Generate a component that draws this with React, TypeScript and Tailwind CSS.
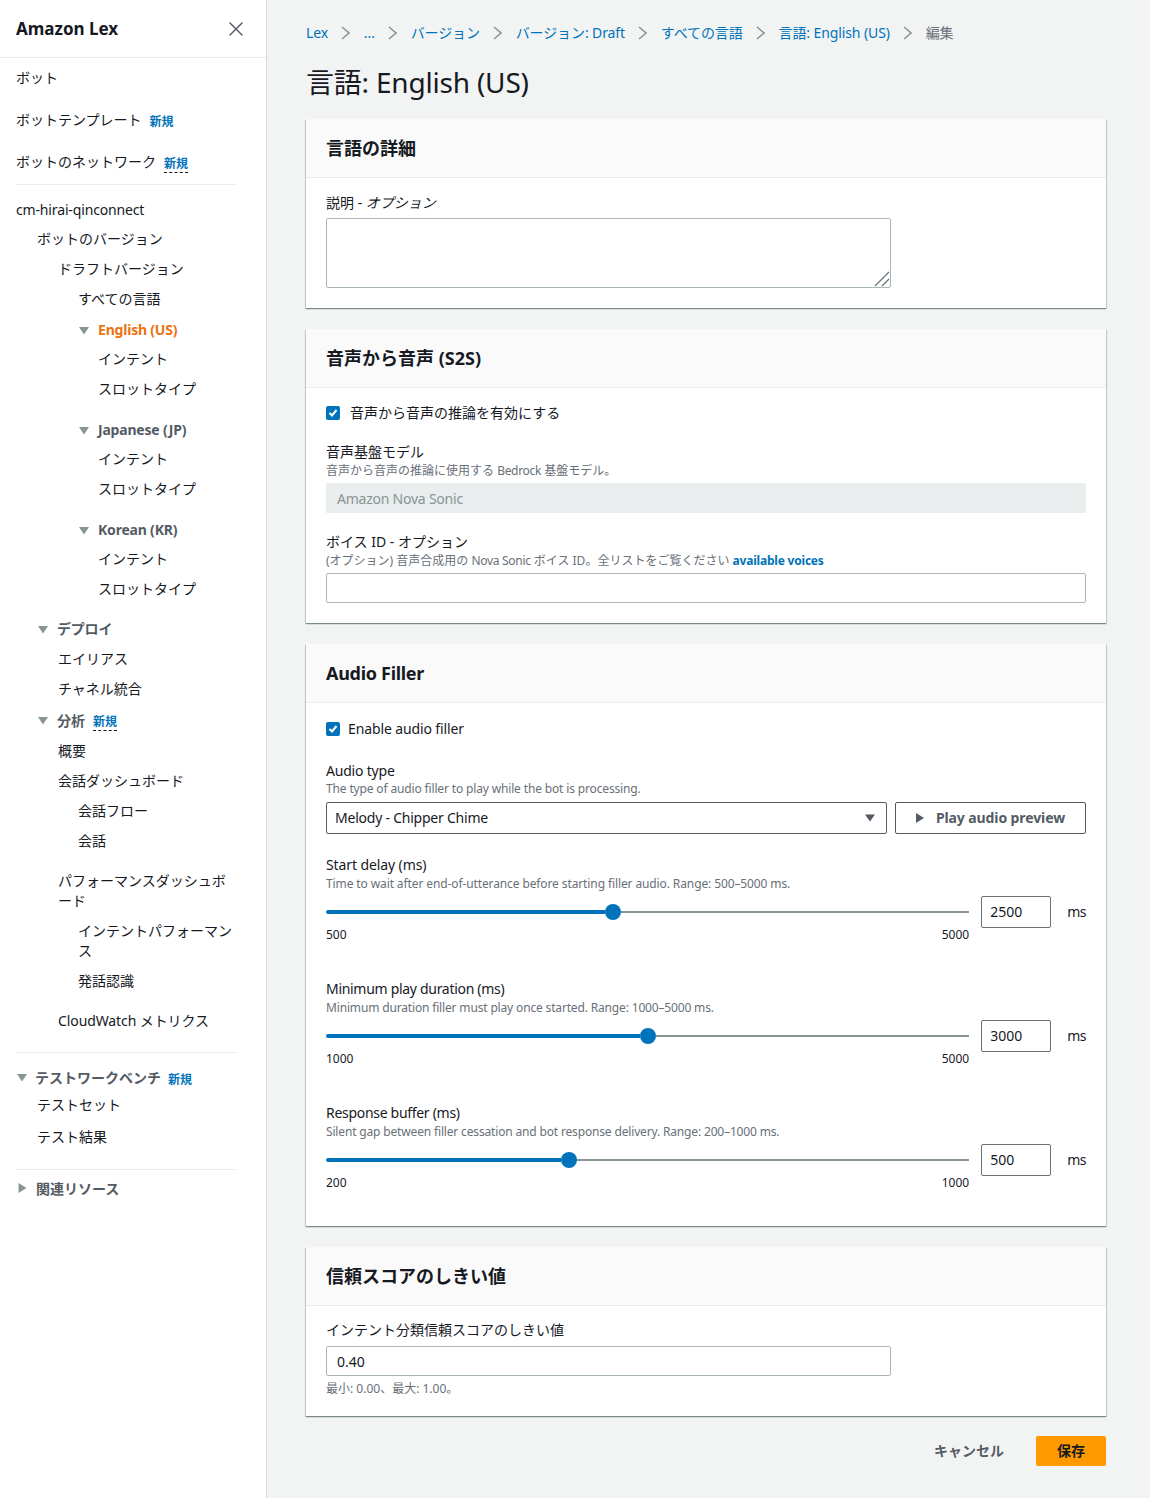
import React from 'react';
import { X } from 'lucide-react';

const font = { fontFamily: '"Noto Sans", "Noto Sans CJK JP", sans-serif' };

function Tri({ right }: { right?: boolean }) {
  return (
    <svg width="10" height="10" viewBox="0 0 10 10" className="shrink-0 fill-[#879596]">
      {right ? <path d="M1.5 0 L9.5 5 L1.5 10 Z" /> : <path d="M0 2 H10 L5 9.5 Z" />}
    </svg>
  );
}

function New({ dashed, className }: { dashed?: boolean; className?: string }) {
  return (
    <span
      className={`text-[12px] font-bold leading-[16px] text-[#0073bb] ${dashed ? 'border-b border-dashed border-[#16191f]' : ''} ${className || ''}`}
    >
      新規
    </span>
  );
}

function NavItem({ className, children }: { className: string; children: React.ReactNode }) {
  return <div className={`flex items-center text-[14px] leading-[20px] text-[#16191f] ${className}`}>{children}</div>;
}

function NavGroup({ className, label, color }: { className: string; label: string; color?: string }) {
  return (
    <div className={`flex items-center gap-[9px] text-[14px] font-bold leading-[20px] tracking-[-0.2px] ${color || 'text-[#545b64]'} ${className}`}>
      <Tri />
      {label}
    </div>
  );
}

function Sidebar() {
  return (
    <aside className="w-[267px] shrink-0 border-r border-[#d5dbdb] bg-white">
      <div className="flex h-[58px] items-center justify-between border-b border-[#eaeded] pl-[16px] pr-[18px]">
        <span className="text-[17px] font-bold text-[#16191f]">Amazon Lex</span>
        <X size={24} strokeWidth={1.4} className="text-[#545b64]" />
      </div>
      <div className="pb-[20px]">
        <NavItem className="h-[30px] mt-[5px] pl-[16px]">ボット</NavItem>
        <NavItem className="h-[30px] mt-[12px] pl-[16px]">ボットテンプレート<New className="ml-[8px] mt-[4px]" /></NavItem>
        <NavItem className="h-[30px] mt-[12px] pl-[16px]">ボットのネットワーク<New dashed className="ml-[8px] mt-[4px]" /></NavItem>
        <div className="mx-[16px] mt-[7px] w-[220px] border-t border-[#eaeded]" />
        <NavItem className="h-[30px] mt-[10px] pl-[16px] tracking-[-0.15px]">cm-hirai-qinconnect</NavItem>
        <NavItem className="h-[30px] pl-[37px] -mt-px">ボットのバージョン</NavItem>
        <NavItem className="h-[30px] pl-[58px]">ドラフトバージョン</NavItem>
        <NavItem className="h-[30px] pl-[78px]">すべての言語</NavItem>
        <NavGroup className="h-[30px] pl-[79px] mt-px" label="English (US)" color="text-[#ec7211]" />
        <NavItem className="h-[30px] pl-[98px] -mt-px">インテント</NavItem>
        <NavItem className="h-[30px] pl-[98px]">スロットタイプ</NavItem>
        <NavGroup className="h-[30px] pl-[79px] mt-[11px]" label="Japanese (JP)" />
        <NavItem className="h-[30px] pl-[98px] -mt-px">インテント</NavItem>
        <NavItem className="h-[30px] pl-[98px]">スロットタイプ</NavItem>
        <NavGroup className="h-[30px] pl-[79px] mt-[11px]" label="Korean (KR)" />
        <NavItem className="h-[30px] pl-[98px] -mt-px">インテント</NavItem>
        <NavItem className="h-[30px] pl-[98px]">スロットタイプ</NavItem>
        <NavGroup className="h-[30px] pl-[38px] mt-[10px]" label="デプロイ" />
        <NavItem className="h-[30px] pl-[58px]">エイリアス</NavItem>
        <NavItem className="h-[30px] pl-[58px]">チャネル統合</NavItem>
        <div className="flex h-[30px] items-center gap-[9px] pl-[38px] mt-px text-[14px] font-bold text-[#545b64]">
          <Tri />
          分析
          <New dashed className="mt-[4px] -ml-px" />
        </div>
        <NavItem className="h-[30px] pl-[58px] mt-px">概要</NavItem>
        <NavItem className="h-[30px] pl-[58px]">会話ダッシュボード</NavItem>
        <NavItem className="h-[30px] pl-[78px]">会話フロー</NavItem>
        <NavItem className="h-[30px] pl-[78px]">会話</NavItem>
        <NavItem className="mt-[15px] pl-[58px] pr-[40px]">パフォーマンスダッシュボード</NavItem>
        <NavItem className="mt-[10px] pl-[78px] pr-[32px]">インテントパフォーマンス</NavItem>
        <NavItem className="h-[30px] mt-[5px] pl-[78px]">発話認識</NavItem>
        <NavItem className="h-[30px] mt-[10px] pl-[58px] tracking-[-0.1px]">CloudWatch メトリクス</NavItem>
        <div className="ml-[16px] mt-[16px] w-[220px] border-t border-[#eaeded]" />
        <div className="flex h-[30px] items-center gap-[8px] pl-[17px] mt-[9px] text-[14px] font-bold text-[#545b64]">
          <Tri />
          テストワークベンチ
          <New className="mt-[6px] -ml-px" />
        </div>
        <NavItem className="h-[30px] pl-[37px] -mt-[2px]">テストセット</NavItem>
        <NavItem className="h-[30px] pl-[37px] mt-[2px]">テスト結果</NavItem>
        <div className="ml-[16px] mt-[17px] w-[220px] border-t border-[#eaeded]" />
        <div className="flex h-[30px] items-center gap-[9px] pl-[17px] mt-[3px] text-[14px] font-bold text-[#545b64]">
          <Tri right />
          関連リソース
        </div>
      </div>
    </aside>
  );
}

function Chevron() {
  return (
    <svg width="9" height="14" viewBox="0 0 9 14" fill="none" className="shrink-0 stroke-[#879596]" strokeWidth="1.5">
      <path d="M1 1 L8 7 L1 13" />
    </svg>
  );
}

function Breadcrumbs() {
  const links = ['Lex', '...', 'バージョン', 'バージョン: Draft', 'すべての言語', '言語: English (US)'];
  return (
    <div className="flex h-[20px] items-center text-[14px] leading-[20px] tracking-[-0.1px]">
      {links.map((l) => (
        <React.Fragment key={l}>
          <span className="text-[#0073bb]">{l}</span>
          <span className="ml-[13px] mr-[13.8px]"><Chevron /></span>
        </React.Fragment>
      ))}
      <span className="text-[#687078]">編集</span>
    </div>
  );
}

function Card({ title, className, titleClass, children }: { title: string; className: string; titleClass?: string; children: React.ReactNode }) {
  return (
    <section className="bg-white shadow-[0_1px_1px_0_rgba(0,28,36,0.3),1px_1px_1px_0_rgba(0,28,36,0.15),-1px_1px_1px_0_rgba(0,28,36,0.15)]">
      <div className={`flex h-[59px] items-center border-b border-[#eaeded] bg-[#fafafa] px-[20px] text-[18px] font-bold text-[#16191f] ${titleClass || ''}`}>
        {title}
      </div>
      <div className={`px-[20px] ${className}`}>{children}</div>
    </section>
  );
}

function Check({ label, className }: { label: string; className: string }) {
  return (
    <div className="flex h-[20px] items-center text-[14px] text-[#16191f]">
      <span className={`mt-px flex h-[14px] w-[14px] items-center justify-center rounded-[2px] bg-[#0073bb] ${className}`}>
        <svg width="10" height="10" viewBox="0 0 10 10" fill="none" stroke="white" strokeWidth="2">
          <path d="M1.5 5 L4 7.5 L8.5 2" />
        </svg>
      </span>
      {label}
    </div>
  );
}

function Label({ children, className }: { children: React.ReactNode; className?: string }) {
  return <div className={`text-[14px] leading-[20px] text-[#16191f] ${className || ''}`}>{children}</div>;
}

function Desc({ children, className }: { children: React.ReactNode; className?: string }) {
  return <div className={`text-[12px] leading-[16px] text-[#687078] ${className || ''}`}>{children}</div>;
}

function Slider({ value, fill, min, max }: { value: string; fill: string; min: string; max: string }) {
  return (
    <div className="mt-[4px] flex items-start">
      <div className="flex-1">
        <div className="flex h-[32px] items-center">
          <div className={`h-[4px] rounded-l-full bg-[#0073bb] ${fill}`} />
          <div className="h-[16px] w-[16px] shrink-0 rounded-full bg-[#0073bb]" />
          <div className="h-[2px] flex-1 bg-[#879596]" />
        </div>
        <div className="-mt-px flex justify-between text-[12px] leading-[16px] text-[#16191f]">
          <span>{min}</span>
          <span>{max}</span>
        </div>
      </div>
      <div className="ml-[12px] flex h-[32px] w-[70px] items-center rounded-[2px] border border-[#687078] pb-px pl-[8px] text-[14px] text-[#16191f]">
        {value}
      </div>
      <div className="ml-[16px] flex h-[32px] items-center pb-px text-[14px] tracking-[-0.5px] text-[#16191f]">ms</div>
    </div>
  );
}

export default function App() {
  return (
    <div className="flex min-h-[1498px] w-[1150px] bg-[#f2f3f3]" style={font}>
      <Sidebar />
      <main className="min-w-0 flex-1 pl-[39px] pr-[44px] pt-[23px]">
        <Breadcrumbs />
        <h1 className="mt-[19px] h-[40px] text-[28px] font-normal leading-[40px] tracking-[-0.2px] text-[#16191f]">言語: English (US)</h1>
        <div className="mt-[17px] flex flex-col gap-[21px]">
          <Card title="言語の詳細" className="pb-[20px] pt-[15px]">
            <Label>説明 - <i>オプション</i></Label>
            <div className="relative mt-[5px] h-[70px] w-[565px] rounded-[2px] border border-[#aab7b8]">
              <svg width="16" height="16" viewBox="0 0 16 16" fill="none" stroke="#687078" className="absolute bottom-0 right-0" strokeWidth="1.2">
                <path d="M1 15 L15 1 M8 15 L15 8" />
              </svg>
            </div>
          </Card>

          <Card title="音声から音声 (S2S)" className="pb-[20px] pt-[14px]">
            <Check label="音声から音声の推論を有効にする" className="mr-[10px]" />
            <Label className="mt-[20px]">音声基盤モデル</Label>
            <Desc className="mt-px">音声から音声の推論に使用する <span className="tracking-[-0.3px]">Bedrock</span> 基盤モデル。</Desc>
            <div className="mt-[4px] flex h-[30px] items-center bg-[#eaeded] px-[11px] text-[14px] tracking-[-0.23px] text-[#879596]">Amazon Nova Sonic</div>
            <Label className="mt-[19px]">ボイス ID - オプション</Label>
            <Desc className="mt-px">
              (オプション) 音声合成用の <span className="tracking-[-0.3px]">Nova Sonic</span> ボイス ID。全リストをご覧ください{' '}
              <span className="font-bold tracking-[-0.2px] text-[#0073bb]">available voices</span>
            </Desc>
            <div className="mt-[4px] h-[30px] rounded-[2px] border border-[#aab7b8]" />
          </Card>

          <Card title="Audio Filler" className="pb-[35px] pt-[15px]" titleClass="tracking-[-0.3px]">
            <div className="tracking-[-0.12px]">
              <Check label="Enable audio filler" className="mr-[8px]" />
            </div>
            <Label className="mt-[23px] tracking-[-0.2px]">Audio type</Label>
            <Desc className="tracking-[-0.15px]">The type of audio filler to play while the bot is processing.</Desc>
            <div className="mt-[5px] flex gap-[8px]">
              <div className="flex h-[32px] w-[561px] items-center justify-between rounded-[2px] border border-[#545b64] pb-px pl-[8px] pr-[11px] text-[14px] tracking-[-0.23px] text-[#16191f]">
                Melody - Chipper Chime
                <svg width="10" height="10" viewBox="0 0 10 10" className="fill-[#545b64]"><path d="M0 1.5 H10 L5 8.5 Z" /></svg>
              </div>
              <div className="flex h-[32px] flex-1 items-center justify-center gap-[12px] rounded-[2px] border border-[#545b64] pb-px text-[14px] font-bold tracking-[-0.1px] text-[#545b64]">
                <svg width="8" height="10" viewBox="0 0 8 10" className="fill-[#545b64]"><path d="M0 0 L8 5 L0 10 Z" /></svg>
                Play audio preview
              </div>
            </div>
            <Label className="mt-[21px] tracking-[-0.1px]">Start delay (ms)</Label>
            <Desc className="mt-px tracking-[-0.11px]">Time to wait after end-of-utterance before starting filler audio. Range: 500–5000 ms.</Desc>
            <Slider value="2500" fill="w-[279px]" min="500" max="5000" />
            <Label className="mt-[36px] tracking-[-0.3px]">Minimum play duration (ms)</Label>
            <Desc className="mt-px tracking-[-0.16px]">Minimum duration filler must play once started. Range: 1000–5000 ms.</Desc>
            <Slider value="3000" fill="w-[314px]" min="1000" max="5000" />
            <Label className="mt-[36px] tracking-[-0.3px]">Response buffer (ms)</Label>
            <Desc className="mt-px tracking-[-0.16px]">Silent gap between filler cessation and bot response delivery. Range: 200–1000 ms.</Desc>
            <Slider value="500" fill="w-[235px]" min="200" max="1000" />
          </Card>

          <Card title="信頼スコアのしきい値" className="pb-[19px] pt-[14px]">
            <Label>インテント分類信頼スコアのしきい値</Label>
            <div className="mt-[6px] flex h-[30px] w-[565px] items-center rounded-[2px] border border-[#aab7b8] pl-[10px] text-[14px] text-[#16191f]">0.40</div>
            <Desc className="mt-[5px]">最小: 0.00、最大: 1.00。</Desc>
          </Card>
        </div>
        <div className="mt-[20px] flex items-center justify-end">
          <span className="mr-[32px] pb-[2px] text-[14px] font-bold text-[#545b64]">キャンセル</span>
          <span className="flex h-[30px] w-[70px] items-center justify-center rounded-[2px] bg-[#ff9900] pb-[2px] text-[14px] font-bold text-[#16191f]">保存</span>
        </div>
      </main>
    </div>
  );
}
